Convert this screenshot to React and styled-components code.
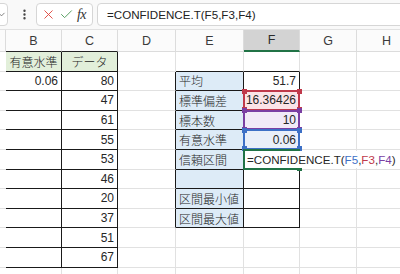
import React from 'react';
import styled, { createGlobalStyle } from 'styled-components';
import { ChevronDown, EllipsisVertical, X, Check } from 'lucide-react';

const GlobalStyle = createGlobalStyle`
  html, body {
    margin: 0;
    padding: 0;
    background: #fff;
  }
  body {
    font-family: "Liberation Sans", "Noto Sans CJK JP", sans-serif;
  }
`;

const COLS = [
  { key: 'A', w: 6 },
  { key: 'B', w: 56 },
  { key: 'C', w: 56 },
  { key: 'D', w: 58 },
  { key: 'E', w: 68 },
  { key: 'F', w: 56 },
  { key: 'G', w: 57 },
  { key: 'H', w: 60 },
];
const ROW_COUNT = 12;
const ROW_H = 19.6;

const GREEN_HEAD = '#e2efda';
const BLUE_LABEL = '#ddebf7';

const MARKS = {
  red: '#c0394b',
  purple: '#7a3fa3',
  blue: '#3d70c6',
  green: '#217346',
};

const CELLS = {
  B0: { text: '有意水準', fill: GREEN_HEAD, align: 'center' },
  C0: { text: 'データ', fill: GREEN_HEAD, align: 'center' },
  B1: { text: '0.06', align: 'right' },
  C1: { text: '80', align: 'right' },
  C2: { text: '47', align: 'right' },
  C3: { text: '61', align: 'right' },
  C4: { text: '55', align: 'right' },
  C5: { text: '53', align: 'right' },
  C6: { text: '46', align: 'right' },
  C7: { text: '20', align: 'right' },
  C8: { text: '37', align: 'right' },
  C9: { text: '51', align: 'right' },
  C10: { text: '67', align: 'right' },
  E1: { text: '平均', fill: BLUE_LABEL },
  E2: { text: '標準偏差', fill: BLUE_LABEL },
  E3: { text: '標本数', fill: BLUE_LABEL },
  E4: { text: '有意水準', fill: BLUE_LABEL },
  E5: { text: '信頼区間', fill: BLUE_LABEL },
  E6: { text: '', fill: BLUE_LABEL },
  E7: { text: '区間最小値', fill: BLUE_LABEL },
  E8: { text: '区間最大値', fill: BLUE_LABEL },
  F1: { text: '51.7', align: 'right' },
  F2: { text: '16.36426', align: 'right', fill: '#fbe4e7', mark: 'red' },
  F3: { text: '10', align: 'right', fill: '#f1eaf7', mark: 'purple' },
  F4: { text: '0.06', align: 'right', fill: '#e9eff9', mark: 'blue' },
  F5: { editing: true, mark: 'green' },
};

const boxed = (c, r) =>
  ((c === 'B' || c === 'C') && r >= 0 && r <= 10) ||
  ((c === 'E' || c === 'F') && r >= 1 && r <= 8);

const nextCol = (c) => {
  const i = COLS.findIndex((col) => col.key === c);
  return COLS[i + 1] ? COLS[i + 1].key : null;
};

const Page = styled.div`
  width: 400px;
  height: 274px;
  overflow: hidden;
  background: #fff;
  color: #262626;
`;

const FormulaBar = styled.div`
  height: 30px;
  display: flex;
  align-items: center;
  gap: 4px;
  background: #f9f9f9;
  border-bottom: 1px solid #e1e1e1;
  box-sizing: border-box;
`;

const Box = styled.div`
  height: 23px;
  box-sizing: border-box;
  display: flex;
  align-items: center;
  background: #fff;
  border: 1px solid #d6d6d6;
  border-radius: 4px;
  flex-shrink: 0;
`;

const NameBox = styled(Box)`
  width: 60px;
  margin-left: -52px;
  justify-content: flex-end;
  color: #555;
`;

const Dots = styled.div`
  width: 16px;
  display: flex;
  justify-content: center;
  color: #444;
  margin-left: 4px;
`;

const ActionBox = styled(Box)`
  width: 57px;
  padding: 0 4px;
  justify-content: space-between;
`;

const Fx = styled.span`
  font-family: "Liberation Serif", "DejaVu Serif", serif;
  font-style: italic;
  font-size: 14px;
  color: #333;
  margin-right: 2px;
  letter-spacing: -0.5px;
`;

const InputBox = styled(Box)`
  flex: 1;
  margin-right: -10px;
  padding-left: 9px;
  font-size: 11.6px;
  color: #222;
  white-space: nowrap;
`;

const Sheet = styled.div`
  display: grid;
  grid-template-columns: ${COLS.map((c) => `${c.w}px`).join(' ')};
  grid-template-rows: 22px repeat(${ROW_COUNT}, ${ROW_H}px);
  width: max-content;
`;

const HeadCell = styled.div`
  box-sizing: border-box;
  display: flex;
  align-items: center;
  justify-content: center;
  font-size: 12.5px;
  background: ${(p) => (p.$active ? '#d3d3d3' : '#fbfbfb')};
  border-right: 1px solid #dcdcdc;
  border-bottom: ${(p) =>
    p.$active ? `2px solid ${MARKS.green}` : p.$dark ? '1px solid #222' : '1px solid #dcdcdc'};
  color: ${(p) => (p.$active ? '#2a2a2a' : '#3a3a3a')};
`;

const Cell = styled.div`
  position: relative;
  box-sizing: border-box;
  display: flex;
  align-items: center;
  justify-content: ${(p) =>
    p.$align === 'right' ? 'flex-end' : p.$align === 'center' ? 'center' : 'flex-start'};
  padding: 0 3px;
  font-size: 12px;
  font-weight: 300;
  white-space: nowrap;
  background: ${(p) => p.$fill || '#fff'};
  border-right: 1px solid ${(p) => (p.$darkRight ? '#1a1a1a' : '#e1e1e1')};
  border-bottom: 1px solid ${(p) => (p.$darkBottom ? '#1a1a1a' : '#e1e1e1')};
  z-index: ${(p) => (p.$top ? 2 : 'auto')};
`;

const RangeMark = styled.div`
  position: absolute;
  left: -1px;
  top: -1px;
  right: -1px;
  bottom: -1px;
  border: 2px solid ${(p) => p.$color};
  pointer-events: none;
  z-index: 1;
`;

const Handle = styled.span`
  position: absolute;
  width: 5px;
  height: 5px;
  background: ${(p) => p.$color};
  ${(p) => (p.$v === 'top' ? 'top: -3.5px;' : 'bottom: -3.5px;')}
  ${(p) => (p.$h === 'left' ? 'left: -3.5px;' : 'right: -3.5px;')}
  z-index: 4;
`;

const Editor = styled.div`
  position: absolute;
  left: 1px;
  top: 1px;
  bottom: 1px;
  display: flex;
  align-items: center;
  padding: 0 3px 0 2px;
  background: #fff;
  font-size: 11.6px;
  font-weight: 400;
  white-space: nowrap;
  z-index: 3;
`;

const Ref = styled.span`
  color: ${(p) => p.$color};
`;

const FormulaText = ({ colored }) => (
  <>
    =CONFIDENCE.T(
    {colored ? <Ref $color={MARKS.blue}>F5</Ref> : 'F5'},
    {colored ? <Ref $color={MARKS.red}>F3</Ref> : 'F3'},
    {colored ? <Ref $color={MARKS.purple}>F4</Ref> : 'F4'})
  </>
);

const Mark = ({ color, corners }) => (
  <RangeMark $color={color}>
    {corners.map(([v, h]) => (
      <Handle key={v + h} $color={color} $v={v} $h={h} />
    ))}
  </RangeMark>
);

const ALL_CORNERS = [
  ['top', 'left'],
  ['top', 'right'],
  ['bottom', 'left'],
  ['bottom', 'right'],
];

const App = () => {
  const rows = Array.from({ length: ROW_COUNT }, (_, r) => r);
  return (
    <>
      <GlobalStyle />
      <Page>
        <FormulaBar>
          <NameBox>
            <ChevronDown size={11} strokeWidth={1.6} />
          </NameBox>
          <Dots>
            <EllipsisVertical size={13} strokeWidth={2.4} />
          </Dots>
          <ActionBox>
            <X size={15} color="#e0463f" strokeWidth={1.5} />
            <Check size={15} color="#4f9a5a" strokeWidth={1.5} />
            <Fx>fx</Fx>
          </ActionBox>
          <InputBox>
            <FormulaText />
          </InputBox>
        </FormulaBar>
        <Sheet>
          {COLS.map((c) => (
            <HeadCell key={c.key} $active={c.key === 'F'} $dark={boxed(c.key, 0)}>
              {c.key === 'A' ? '' : c.key}
            </HeadCell>
          ))}
          {rows.map((r) =>
            COLS.map((c) => {
              const id = `${c.key}${r}`;
              const cell = CELLS[id] || {};
              const n = nextCol(c.key);
              const darkRight = boxed(c.key, r) || (n && boxed(n, r));
              const darkBottom = boxed(c.key, r) || boxed(c.key, r + 1);
              return (
                <Cell
                  key={id}
                  $align={cell.align}
                  $fill={cell.fill}
                  $darkRight={darkRight}
                  $darkBottom={darkBottom}
                  $top={cell.editing}
                >
                  {cell.text}
                  {cell.mark && cell.mark !== 'green' && (
                    <Mark color={MARKS[cell.mark]} corners={ALL_CORNERS} />
                  )}
                  {cell.editing && (
                    <>
                      <Mark color={MARKS.green} corners={[['bottom', 'right']]} />
                      <Editor>
                        <FormulaText colored />
                      </Editor>
                    </>
                  )}
                </Cell>
              );
            })
          )}
        </Sheet>
      </Page>
    </>
  );
};

export default App;
